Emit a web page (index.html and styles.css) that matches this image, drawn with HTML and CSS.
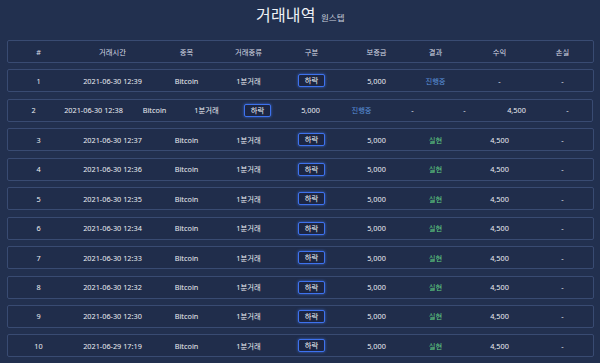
FILE: index.html
```html
<!DOCTYPE html>
<html lang="ko">
<head>
<meta charset="utf-8">
<link rel="stylesheet" href="styles.css">
</head>
<body>
<div class="page">
  <h1 class="title">거래내역 <span class="sub">원스텝</span></h1>
  <div class="list">
    <div class="row head">
      <div>#</div><div>거래시간</div><div>종목</div><div>거래종류</div><div>구분</div><div>보증금</div><div>결과</div><div>수익</div><div>손실</div>
    </div>
    <div class="row">
      <div>1</div><div>2021-06-30 12:39</div><div>Bitcoin</div><div>1분거래</div><div><span class="btn">하락</span></div><div>5,000</div><div class="ing">진행중</div><div>-</div><div>-</div>
    </div>
    <div class="row alt">
      <div>2</div><div>2021-06-30 12:38</div><div>Bitcoin</div><div>1분거래</div><div><span class="btn">하락</span></div><div>5,000</div><div class="ing">진행중</div><div>-</div><div>-</div><div>4,500</div><div>-</div>
    </div>
    <div class="row">
      <div>3</div><div>2021-06-30 12:37</div><div>Bitcoin</div><div>1분거래</div><div><span class="btn">하락</span></div><div>5,000</div><div class="ok">실현</div><div>4,500</div><div>-</div>
    </div>
    <div class="row">
      <div>4</div><div>2021-06-30 12:36</div><div>Bitcoin</div><div>1분거래</div><div><span class="btn">하락</span></div><div>5,000</div><div class="ok">실현</div><div>4,500</div><div>-</div>
    </div>
    <div class="row">
      <div>5</div><div>2021-06-30 12:35</div><div>Bitcoin</div><div>1분거래</div><div><span class="btn">하락</span></div><div>5,000</div><div class="ok">실현</div><div>4,500</div><div>-</div>
    </div>
    <div class="row">
      <div>6</div><div>2021-06-30 12:34</div><div>Bitcoin</div><div>1분거래</div><div><span class="btn">하락</span></div><div>5,000</div><div class="ok">실현</div><div>4,500</div><div>-</div>
    </div>
    <div class="row">
      <div>7</div><div>2021-06-30 12:33</div><div>Bitcoin</div><div>1분거래</div><div><span class="btn">하락</span></div><div>5,000</div><div class="ok">실현</div><div>4,500</div><div>-</div>
    </div>
    <div class="row">
      <div>8</div><div>2021-06-30 12:32</div><div>Bitcoin</div><div>1분거래</div><div><span class="btn">하락</span></div><div>5,000</div><div class="ok">실현</div><div>4,500</div><div>-</div>
    </div>
    <div class="row">
      <div>9</div><div>2021-06-30 12:30</div><div>Bitcoin</div><div>1분거래</div><div><span class="btn">하락</span></div><div>5,000</div><div class="ok">실현</div><div>4,500</div><div>-</div>
    </div>
    <div class="row">
      <div>10</div><div>2021-06-29 17:19</div><div>Bitcoin</div><div>1분거래</div><div><span class="btn">하락</span></div><div>5,000</div><div class="ok">실현</div><div>4,500</div><div>-</div>
    </div>
  </div>
</div>
</body>
</html>
```
FILE: styles.css
```css
html, body {
  margin: 0;
  padding: 0;
  background: #22304f;
  height: 100%;
  overflow: hidden;
}
body {
  font-family: "Noto Sans", "Noto Sans CJK KR", sans-serif;
  color: #eceef3;
}
.page {
  padding: 0 6px 0 6.5px;
}
.title {
  margin: 0;
  height: 40px;
  padding-top: 3px;
  box-sizing: border-box;
  text-align: center;
  font-weight: 400;
  font-size: 16px;
  line-height: 24px;
  color: #eef0f5;
  letter-spacing: 0.2px;
}
.sub {
  font-size: 8.5px;
  color: #c9cfdc;
  letter-spacing: 0;
  margin-left: 1px;
}
.list {
  display: flex;
  flex-direction: column;
  gap: 6.45px;
}
.row {
  display: grid;
  grid-template-columns: 62px 86px 62px 62px 64px 66px 52px 76px 50px;
  align-items: center;
  height: 23px;
  box-sizing: border-box;
  border: 1px solid #394b72;
  border-radius: 2px;
  background: #202d4b;
  font-size: 7.3px;
  line-height: 10px;
  text-align: center;
  white-space: nowrap;
}
.row.head {
  color: #d8dce6;
}
.row.alt {
  grid-template-columns: 52px 68px 54px 50px 52px 54px 48px 54px 50px 54px 48px;
  width: 586px;
}
.btn {
  display: inline-block;
  width: 27px;
  height: 13px;
  box-sizing: border-box;
  border: 1.5px solid #3e72ee;
  border-radius: 2px;
  background: #1c2644;
  box-shadow: 0 0 3px rgba(70, 130, 255, 0.7);
  line-height: 10px;
  font-size: 7.3px;
  color: #f2f4f8;
  vertical-align: middle;
}
.ing {
  color: #5c94de;
}
.ok {
  color: #62d484;
}
```
